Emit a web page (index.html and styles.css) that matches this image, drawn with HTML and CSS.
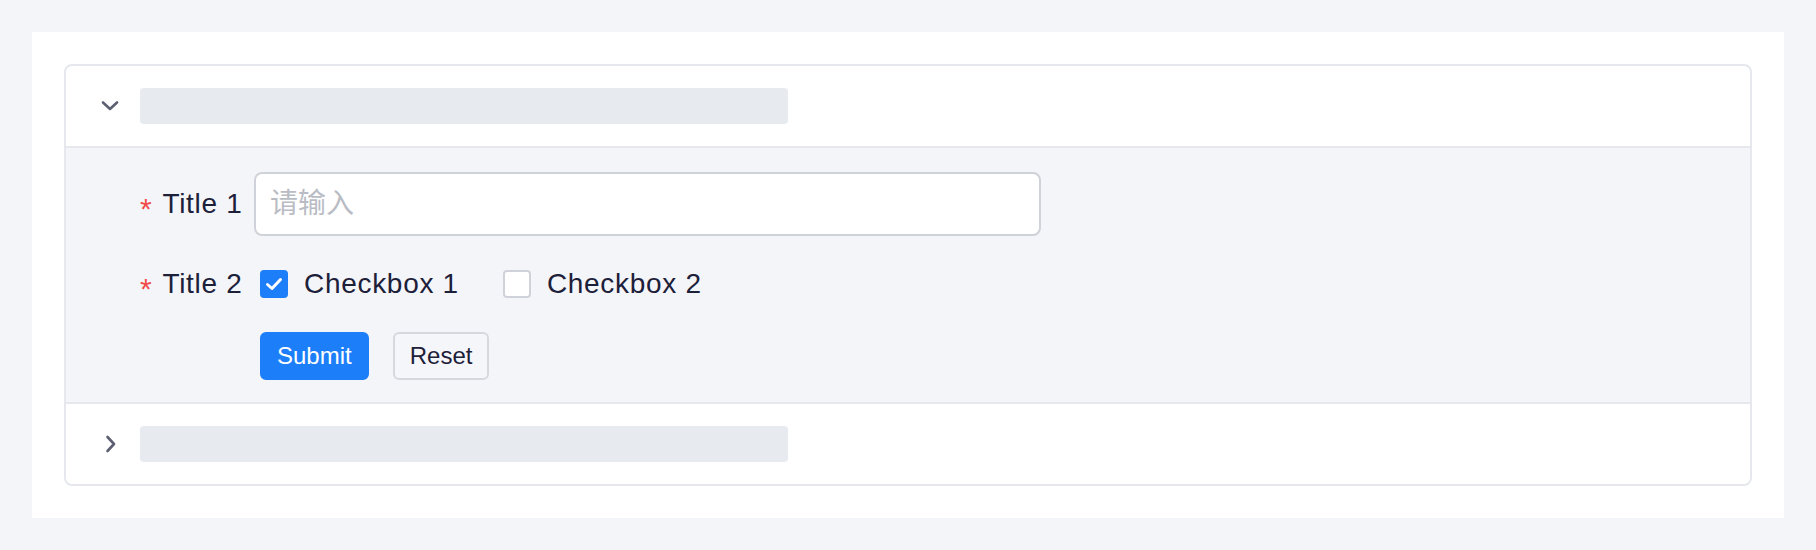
FILE: index.html
```html
<!DOCTYPE html>
<html lang="zh">
<head>
<meta charset="utf-8">
<title>Collapse Form</title>
<link rel="stylesheet" href="styles.css">
</head>
<body>
<div class="panel">
  <div class="collapse">
    <div class="collapse-header">
      <span class="arrow">
        <svg width="20" height="20" viewBox="0 0 20 20"><path d="M3 6.5 L10 13 L17 6.5" fill="none" stroke="#5d6073" stroke-width="2.6" stroke-linecap="round" stroke-linejoin="round"/></svg>
      </span>
      <span class="skeleton"></span>
    </div>
    <div class="collapse-body">
      <form class="form">
        <div class="form-row">
          <label class="form-label"><span class="required">*</span>Title 1</label>
          <input class="text-input" type="text" placeholder="请输入">
        </div>
        <div class="form-row">
          <label class="form-label"><span class="required">*</span>Title 2</label>
          <div class="checkbox-group">
            <span class="checkbox">
              <span class="box checked">
                <svg width="28" height="28" viewBox="0 0 28 28"><path d="M7.5 14.5 L12 18.5 L20.5 9.5" fill="none" stroke="#ffffff" stroke-width="3" stroke-linecap="round" stroke-linejoin="round"/></svg>
              </span>
              <span class="checkbox-text">Checkbox 1</span>
            </span>
            <span class="checkbox">
              <span class="box"></span>
              <span class="checkbox-text">Checkbox 2</span>
            </span>
          </div>
        </div>
        <div class="form-row">
          <span></span>
          <div class="actions">
            <button type="button" class="btn btn-primary">Submit</button>
            <button type="button" class="btn btn-default">Reset</button>
          </div>
        </div>
      </form>
    </div>
    <div class="collapse-header">
      <span class="arrow">
        <svg width="20" height="20" viewBox="0 0 20 20"><path d="M7.5 3 L14 10 L7.5 17" fill="none" stroke="#5d6073" stroke-width="2.6" stroke-linecap="round" stroke-linejoin="round"/></svg>
      </span>
      <span class="skeleton"></span>
    </div>
  </div>
</div>
</body>
</html>
```

FILE: styles.css
```css
* {
  box-sizing: border-box;
}

html, body {
  margin: 0;
  padding: 0;
}

body {
  background: #f4f5f9;
  padding: 32px;
  font-family: "Liberation Sans", Arial, "Noto Sans CJK SC", sans-serif;
  color: #1d2039;
}

.panel {
  background: #ffffff;
  padding: 32px;
}

.collapse {
  border: 2px solid #e6e8ed;
  border-radius: 8px;
  overflow: hidden;
  background: #ffffff;
}

.collapse-header {
  height: 80px;
  display: flex;
  align-items: center;
  padding-left: 34px;
}

.arrow {
  width: 20px;
  height: 20px;
  display: flex;
  align-items: center;
  justify-content: center;
  margin-right: 20px;
}

.arrow svg {
  display: block;
}

.skeleton {
  width: 648px;
  height: 36px;
  border-radius: 4px;
  background: #e7eaef;
}

.collapse-body {
  background: #f4f5f9;
  border-top: 2px solid #e6e8ed;
  border-bottom: 2px solid #e6e8ed;
  padding: 24px 0 22px 74px;
}

.form {
  display: flex;
  flex-direction: column;
  gap: 16px;
}

.form-row {
  display: grid;
  grid-template-columns: 114px auto;
  align-items: center;
  justify-content: start;
  min-height: 48px;
}

.form-label {
  font-size: 28px;
  line-height: 64px;
  letter-spacing: 0.7px;
  white-space: nowrap;
  display: flex;
  align-items: center;
}

.required {
  color: #f04a4a;
  font-size: 30px;
  margin-right: 10px;
  position: relative;
  top: 5px;
}

.text-input {
  width: 787px;
  height: 64px;
  border: 2px solid #cfd2d8;
  border-radius: 8px;
  background: #ffffff;
  padding: 0 14px;
  font-family: "Liberation Sans", Arial, "Noto Sans CJK SC", sans-serif;
  font-size: 28px;
  color: #1d2039;
  outline: none;
}

.text-input::placeholder {
  color: #b9bcc4;
  font-family: "Noto Sans CJK SC", sans-serif;
}

.checkbox-group {
  display: flex;
  align-items: center;
  gap: 44px;
  padding-left: 6px;
}

.checkbox {
  display: flex;
  align-items: center;
  gap: 16px;
}

.box {
  width: 28px;
  height: 28px;
  border-radius: 4px;
  border: 2px solid #cfd2d8;
  background: #ffffff;
  display: block;
}

.box.checked {
  border: none;
  background: #1c7ef8;
}

.box svg {
  display: block;
}

.checkbox-text {
  font-size: 28px;
  line-height: 64px;
  letter-spacing: 0.7px;
}

.actions {
  display: flex;
  gap: 24px;
  padding-left: 6px;
}

.btn {
  height: 48px;
  padding: 0 15px;
  border-radius: 6px;
  font-family: "Liberation Sans", Arial, sans-serif;
  font-size: 24px;
  cursor: pointer;
}

.btn-primary {
  background: #1c7ef8;
  border: 2px solid #1c7ef8;
  color: #ffffff;
}

.btn-default {
  background: #f5f6f9;
  border: 2px solid #d6d8dd;
  color: #1d2039;
}
```
